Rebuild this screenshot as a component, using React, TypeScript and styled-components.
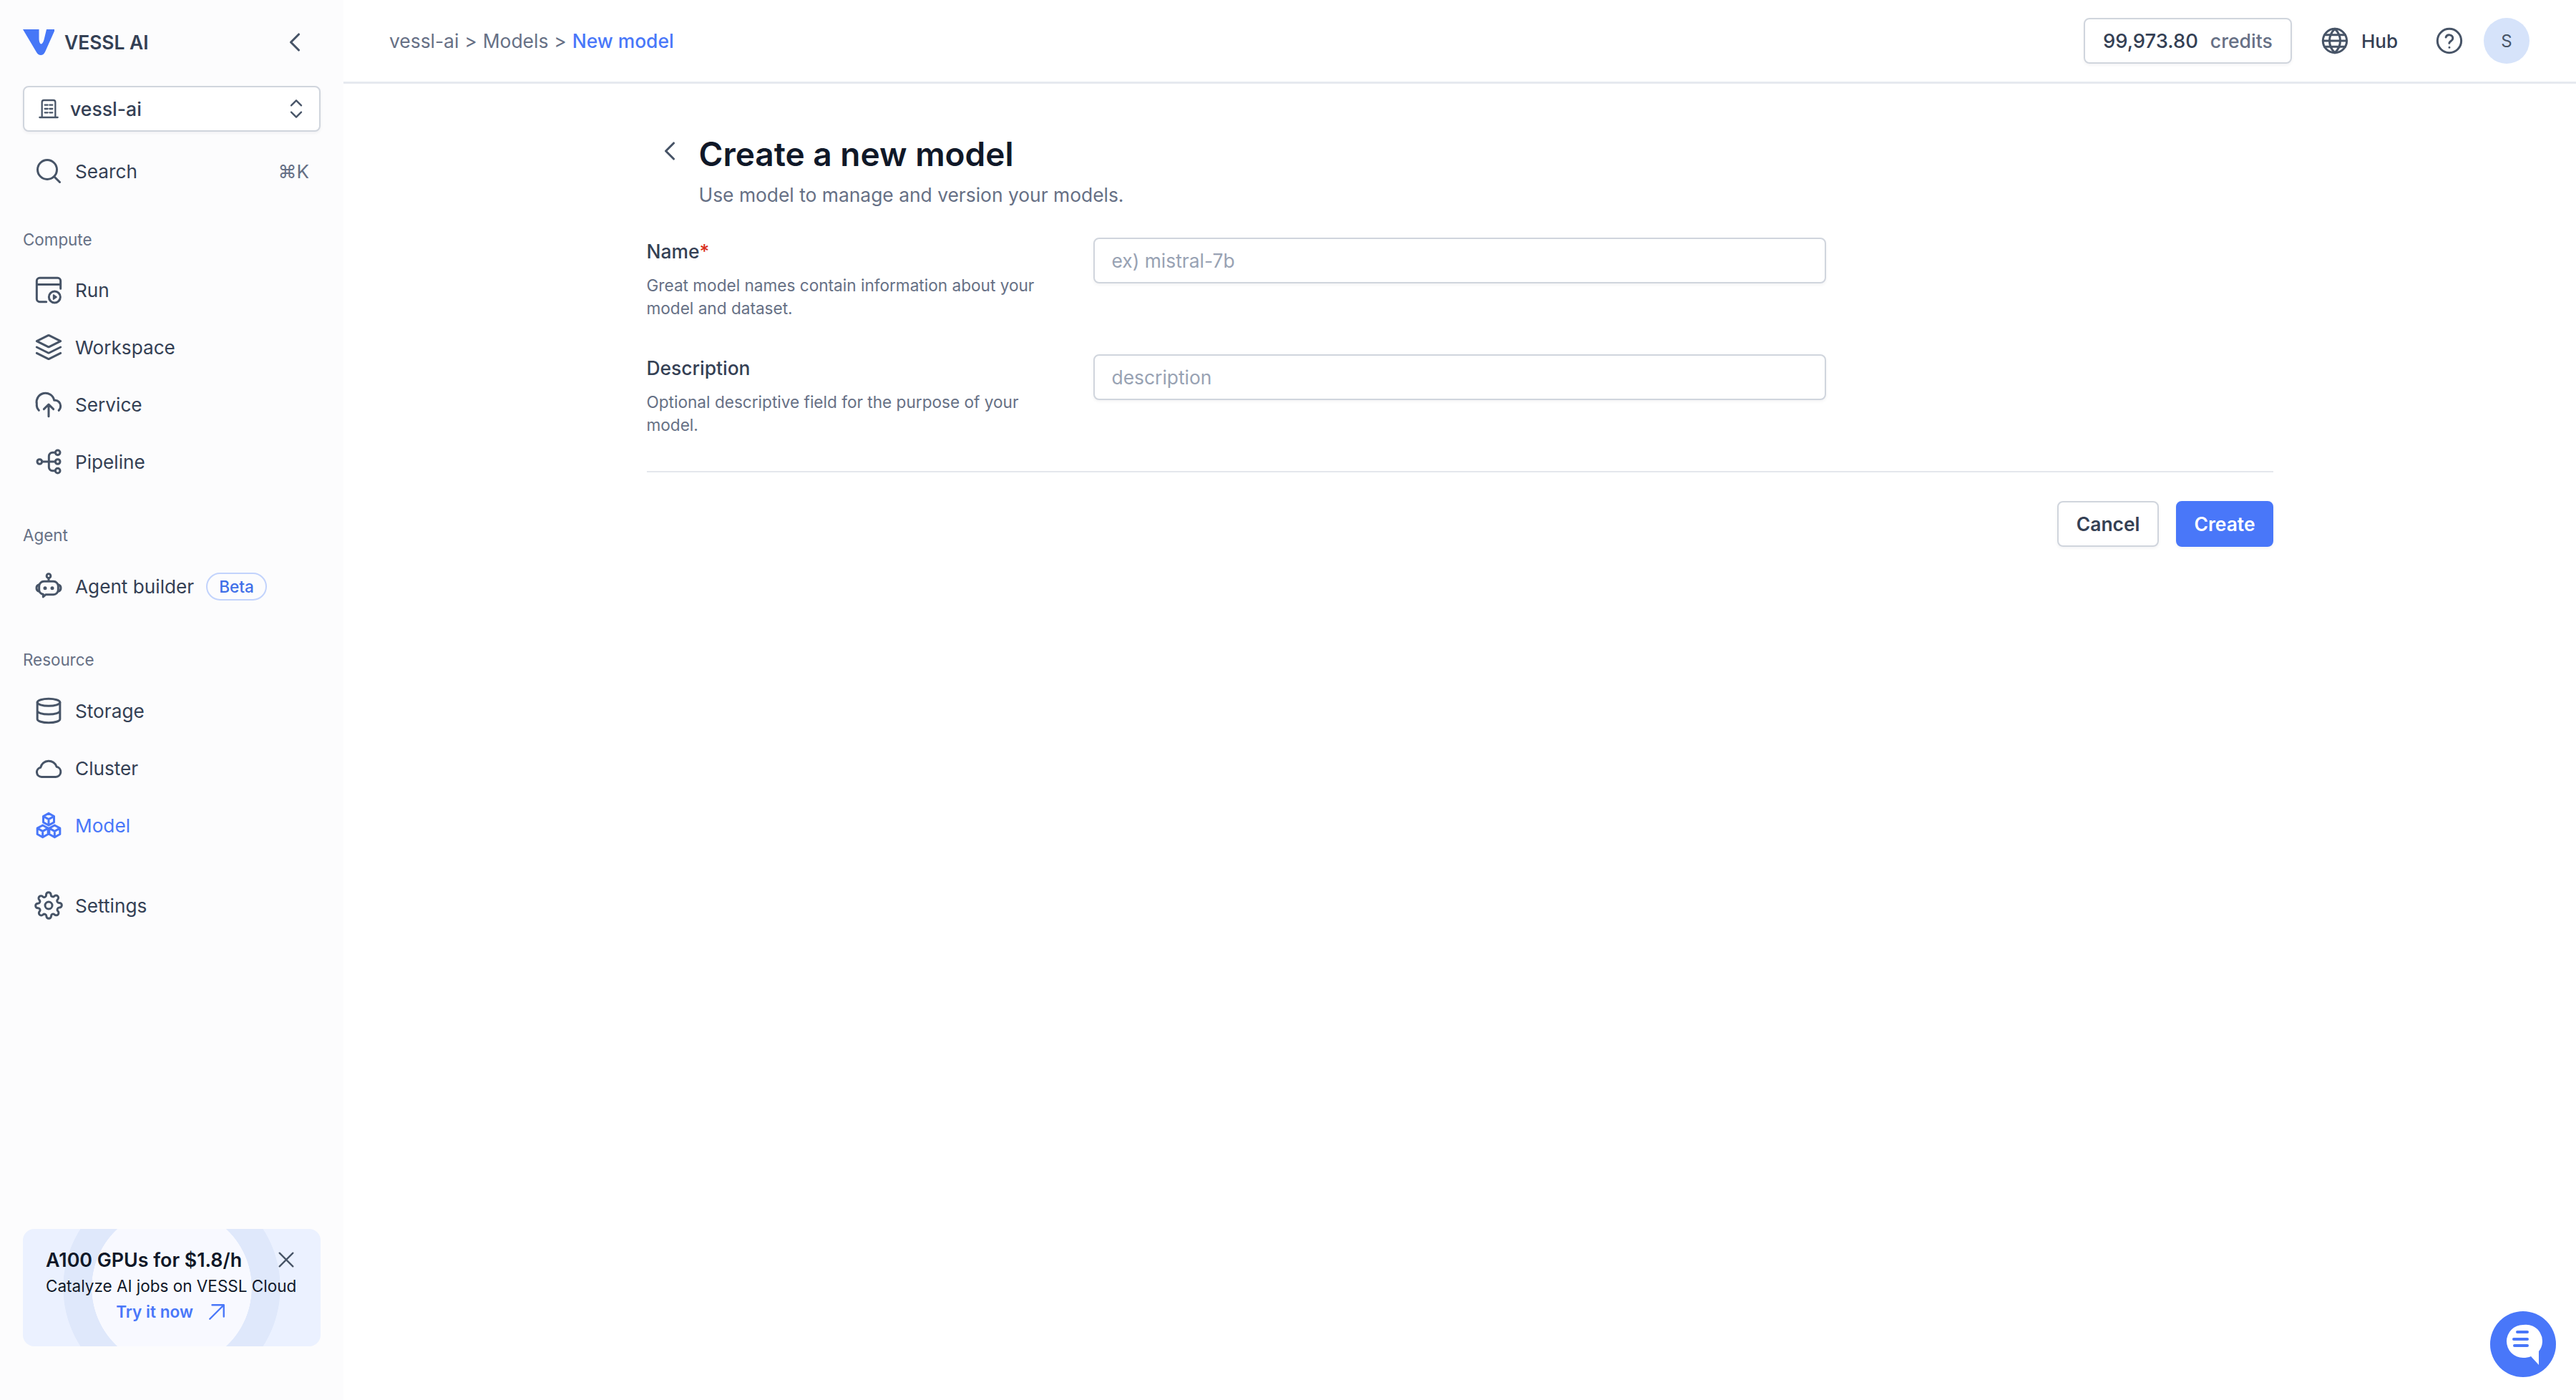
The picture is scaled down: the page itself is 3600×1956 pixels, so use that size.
import React from "react";
import styled, { createGlobalStyle } from "styled-components";

const BLUE = "#4977f9";

const Global = createGlobalStyle`
  html, body { margin: 0; padding: 0; background: #fff; }
  body { font-family: Inter, "Noto Sans", "Liberation Sans", sans-serif; }
  * { box-sizing: border-box; }
`;

const Shell = styled.div`
  display: flex;
  width: 3600px;
  height: 1956px;
  overflow: hidden;
`;

const Sidebar = styled.aside`
  width: 480px;
  flex: none;
  display: flex;
  flex-direction: column;
  padding: 0 32px 75px;
  background: #fcfcfd;
`;

const Brand = styled.div`
  height: 120px;
  flex: none;
  display: flex;
  align-items: center;
  padding-bottom: 2px;
`;

const BrandName = styled.span`
  margin-left: 14px;
  font-size: 26.4px;
  font-weight: 600;
  color: #344054;
`;

const Collapse = styled.span`
  margin-left: auto;
  margin-right: 14px;
  display: flex;
  color: #475467;
`;

const Selector = styled.div`
  height: 64px;
  flex: none;
  display: flex;
  align-items: center;
  padding: 0 18px 0 18px;
  margin-bottom: 15px;
  background: #fff;
  border: 2px solid #d0d5dd;
  border-radius: 8px;
  box-shadow: 0 2px 4px rgba(16, 24, 40, 0.05);
  font-size: 26.6px;
  font-weight: 500;
  color: #344054;
  svg { color: #475467; }
`;

const SelectorName = styled.span`
  margin-left: 14px;
  flex: 1;
`;

const NavRow = styled.div<{ $active?: boolean }>`
  height: 80px;
  flex: none;
  display: flex;
  align-items: center;
  gap: 17px;
  padding: 0 16px;
  font-size: 26.2px;
  color: ${(p) => (p.$active ? BLUE : "#344054")};
  svg { color: ${(p) => (p.$active ? BLUE : "#475467")}; flex: none; }
`;

const Shortcut = styled.span`
  margin-left: auto;
  color: #667085;
  font-size: 26px;
`;

const SectionLabel = styled.div<{ $first?: boolean }>`
  flex: none;
  padding: ${(p) => (p.$first ? "40px 0 14px" : "47px 0 15px")};
  font-size: 22.4px;
  line-height: 32px;
  color: #667085;
`;

const BetaBadge = styled.span`
  height: 39px;
  display: flex;
  align-items: center;
  padding: 0 16px;
  border: 2px solid #c2d3fc;
  border-radius: 20px;
  font-size: 22.6px;
  font-weight: 500;
  color: #3f6fe8;
`;

const SettingsGroup = styled.div`
  margin-top: 32px;
`;

const Promo = styled.div`
  margin-top: auto;
  height: 164px;
  flex: none;
  display: flex;
  flex-direction: column;
  padding: 26px 34px 0 32px;
  border-radius: 16px;
  background:
    radial-gradient(circle 112px at 208px 82px, #f8f9ff 99.5%, transparent 100%),
    radial-gradient(circle 152px at 208px 82px, #dfe8fb 99.5%, transparent 100%),
    #ebf1ff;
`;

const PromoTop = styled.div`
  display: flex;
  align-items: center;
  justify-content: space-between;
  height: 34px;
  svg { color: #475467; }
`;

const PromoTitle = styled.span`
  font-size: 26.8px;
  font-weight: 600;
  color: #101828;
`;

const PromoText = styled.div`
  margin-top: 4px;
  font-size: 22.5px;
  line-height: 32px;
  white-space: nowrap;
  color: #101828;
`;

const PromoLink = styled.div`
  margin-top: 4px;
  display: flex;
  align-items: center;
  justify-content: center;
  gap: 20px;
  font-size: 22.6px;
  line-height: 32px;
  font-weight: 600;
  color: ${BLUE};
  svg { color: ${BLUE}; }
`;

const Content = styled.div`
  flex: 1;
  display: flex;
  flex-direction: column;
  min-width: 0;
`;

const Header = styled.header`
  height: 117px;
  flex: none;
  display: flex;
  align-items: center;
  padding: 0 65px 0 64px;
  background: #fff;
  border-bottom: 3px solid #e6e9ef;
`;

const Crumbs = styled.div`
  display: flex;
  gap: 8px;
  padding-bottom: 1px;
  font-size: 26.4px;
  color: #667085;
`;

const CrumbCurrent = styled.span`
  color: ${BLUE};
  font-weight: 500;
`;

const HeaderRight = styled.div`
  margin-left: auto;
  display: flex;
  align-items: center;
`;

const Credits = styled.div`
  width: 291px;
  height: 64px;
  display: flex;
  align-items: center;
  justify-content: center;
  gap: 17px;
  margin-right: 40px;
  border: 2px solid #d0d5dd;
  border-radius: 8px;
  box-shadow: 0 2px 4px rgba(16, 24, 40, 0.05);
  font-size: 27.4px;
  font-weight: 500;
  color: #344054;
`;

const CreditsUnit = styled.span`
  font-size: 26.6px;
  color: #667085;
`;

const HubLink = styled.div`
  display: flex;
  align-items: center;
  gap: 17px;
  margin-right: 52px;
  font-size: 26px;
  font-weight: 500;
  color: #344054;
  svg { color: #475467; }
`;

const HelpIcon = styled.span`
  display: flex;
  color: #475467;
  margin-right: 28px;
`;

const Avatar = styled.div`
  width: 64px;
  height: 64px;
  border-radius: 50%;
  display: flex;
  align-items: center;
  justify-content: center;
  background: #d6e3fa;
  font-size: 24px;
  color: #475467;
`;

const Main = styled.main`
  flex: 1;
  display: flex;
  justify-content: center;
  background: #fff;
`;

const FormPanel = styled.div`
  width: 2273px;
  padding-top: 68px;
`;

const TitleRow = styled.div`
  display: flex;
  align-items: flex-start;
  gap: 19px;
  padding-left: 10px;
  svg { color: #475467; flex: none; margin-top: 4px; }
`;

const TitleBlock = styled.div`
  display: flex;
  flex-direction: column;
`;

const Title = styled.h1`
  margin: 0;
  font-size: 46px;
  line-height: 60px;
  font-weight: 600;
  color: #101828;
`;

const Subtitle = styled.p`
  margin: 7px 0 0;
  font-size: 26.4px;
  line-height: 40px;
  color: #667085;
`;

const FieldRow = styled.div<{ $gap: number }>`
  display: flex;
  margin-top: ${(p) => p.$gap}px;
`;

const FieldInfo = styled.div`
  width: 624px;
  flex: none;
`;

const FieldLabel = styled.div`
  font-size: 26.4px;
  line-height: 38px;
  font-weight: 500;
  color: #344054;
`;

const Required = styled.span`
  color: #d92d20;
`;

const FieldHelp = styled.div`
  margin-top: 13px;
  width: 560px;
  font-size: 22.6px;
  line-height: 32px;
  color: #667085;
`;

const TextInput = styled.input`
  width: 1024px;
  height: 64px;
  padding: 0 24px;
  background: #fff;
  border: 2px solid #d0d5dd;
  border-radius: 8px;
  box-shadow: 0 2px 4px rgba(16, 24, 40, 0.05);
  font-family: inherit;
  font-size: 26.4px;
  color: #344054;
  outline: none;
  &::placeholder { color: #98a2b3; opacity: 1; }
`;

const Divider = styled.hr`
  margin: 48px 0 40px;
  height: 2px;
  border: 0;
  background: #e4e7ec;
`;

const Actions = styled.div`
  display: flex;
  justify-content: flex-end;
  gap: 24px;
`;

const Button = styled.button<{ $primary?: boolean }>`
  height: 64px;
  padding: 0 ${(p) => (p.$primary ? "23px" : "25px")};
  border-radius: 8px;
  border: 2px solid ${(p) => (p.$primary ? BLUE : "#d0d5dd")};
  background: ${(p) => (p.$primary ? BLUE : "#fff")};
  color: ${(p) => (p.$primary ? "#fff" : "#344054")};
  box-shadow: 0 2px 4px rgba(16, 24, 40, 0.05);
  font-family: inherit;
  font-size: 26.4px;
  font-weight: 600;
`;

const ChatBubble = styled.div`
  position: fixed;
  left: 3480px;
  top: 1832px;
  width: 92px;
  height: 92px;
  border-radius: 50%;
  background: ${BLUE};
  display: flex;
  align-items: center;
  justify-content: center;
`;

const Glyph = styled.svg`
  display: block;
  fill: none;
  stroke: currentColor;
  stroke-linecap: round;
  stroke-linejoin: round;
`;

const Icon = ({ size = 40, sw = 1.8, children }: { size?: number; sw?: number; children: React.ReactNode }) => (
  <Glyph width={size} height={size} viewBox="0 0 24 24" strokeWidth={sw}>
    {children}
  </Glyph>
);

const Logo = () => (
  <svg width="44" height="36" viewBox="0 0 44 36">
    <path
      d="M0 0H22.5V13C22.5 17 24 20.5 25.5 20.5C27 20.5 28.5 18 29.5 14.5L33 0H44V2.5L31 31.5C29.5 34.8 27.5 36 25 36C22.5 36 20.5 34.5 19 32Z"
      fill="#4677f7"
    />
  </svg>
);

const icons = {
  run: (
    <Icon>
      <path d="M22 11V4.500a2.500 2.500 0 0 0-2.500-2.500h-15A2.500 2.500 0 0 0 2 4.500v15A2.500 2.500 0 0 0 4.500 22H10M2 7.500h20" />
      <circle cx="17" cy="18" r="4.800" />
      <path d="M16 16.200l2.600 1.800-2.600 1.800z" fill="currentColor" strokeWidth="1" />
    </Icon>
  ),
  layers: (
    <Icon>
      <path d="M2 12l9.600 4.800c.15.07.25.12.4.12s.25-.05.4-.12L22 12M2 17l9.600 4.800c.15.07.25.12.4.12s.25-.05.4-.12L22 17M2 7l9.600-4.800c.15-.07.25-.12.4-.12s.25.05.4.12L22 7l-9.600 4.800c-.15.07-.25.12-.4.12s-.25-.05-.4-.12L2 7z" />
    </Icon>
  ),
  service: (
    <Icon>
      <path d="M8 16l4-4 4 4M12 12v10M20.500 17a5 5 0 0 0 1.500-3.800 4.800 4.800 0 0 0-4.500-4.700h-.9A7 7 0 0 0 2 11.500 7 7 0 0 0 3.800 17" />
    </Icon>
  ),
  pipeline: (
    <Icon>
      <circle cx="4.400" cy="12" r="2" />
      <circle cx="19.600" cy="4.400" r="2" />
      <circle cx="19.600" cy="12" r="2" />
      <circle cx="19.600" cy="19.600" r="2" />
      <path d="M6.400 12h11.200M17.600 4.400h-2.400a3 3 0 0 0-3 3v9.200a3 3 0 0 0 3 3h2.400" />
    </Icon>
  ),
  agent: (
    <Icon>
      <circle cx="12" cy="3.400" r="1.700" />
      <path d="M12 5.200V8M8 8h8a4 4 0 0 1 4 4v3a4 4 0 0 1-4 4H9.600L7.400 21v-2.200A4 4 0 0 1 4 15v-3a4 4 0 0 1 4-4z" />
      <path d="M4 10.600a3 3 0 0 0-2.200 2.900 3 3 0 0 0 2.200 2.900M20 10.600a3 3 0 0 1 2.200 2.900 3 3 0 0 1-2.200 2.900" />
      <circle cx="9" cy="13.600" r=".6" fill="currentColor" />
      <circle cx="15" cy="13.600" r=".6" fill="currentColor" />
    </Icon>
  ),
  storage: (
    <Icon>
      <ellipse cx="12" cy="5" rx="9.500" ry="3" />
      <path d="M2.500 5v14c0 1.700 4 3 9.500 3s9.500-1.300 9.500-3V5M2.500 12c0 1.700 4 3 9.500 3s9.500-1.300 9.500-3" />
    </Icon>
  ),
  cloud: (
    <Icon>
      <path d="M6 19.500a4 4 0 0 1-.8-7.900 7 7 0 0 1 13.500-.6A4.300 4.300 0 0 1 18 19.500z" />
    </Icon>
  ),
  model: (
    <Icon>
      <path d="M12 2l4.500 2.500v5L12 12 7.500 9.500v-5zM7.500 4.500L12 7l4.500-2.500M12 7v5" />
      <path d="M7 12l4.500 2.500v5L7 22l-4.500-2.500v-5zM2.500 14.500L7 17l4.500-2.500M7 17v5" />
      <path d="M17 12l4.500 2.500v5L17 22l-4.500-2.500v-5zM12.500 14.500L17 17l4.500-2.500M17 17v5" />
    </Icon>
  ),
  settings: (
    <Icon>
      <circle cx="12" cy="12" r="3" />
      <path d="M19.400 15a1.650 1.650 0 0 0 .33 1.820l.06.06a2 2 0 1 1-2.830 2.830l-.06-.06a1.650 1.650 0 0 0-2.800 1.170V21a2 2 0 1 1-4 0v-.09a1.650 1.650 0 0 0-2.800-1.150l-.06.06a2 2 0 1 1-2.830-2.830l.06-.06A1.650 1.650 0 0 0 3.300 14.300H3a2 2 0 1 1 0-4h.09a1.650 1.650 0 0 0 1.150-2.800l-.06-.06a2 2 0 1 1 2.830-2.830l.06.06A1.650 1.650 0 0 0 9.900 3.500V3a2 2 0 1 1 4 0v.09a1.650 1.650 0 0 0 2.800 1.150l.06-.06a2 2 0 1 1 2.830 2.830l-.06.06a1.650 1.650 0 0 0 1.170 2.800H21a2 2 0 1 1 0 4h-.09a1.650 1.650 0 0 0-1.510 1z" />
    </Icon>
  ),
};

const nav = (icon: React.ReactNode, label: string, active?: boolean) => (
  <NavRow $active={active}>
    {icon}
    <span>{label}</span>
  </NavRow>
);

export default function App() {
  return (
    <>
      <Global />
      <Shell>
        <Sidebar>
          <Brand>
            <Logo />
            <BrandName>VESSL AI</BrandName>
            <Collapse>
              <Icon size={44} sw={1.7}>
                <path d="M15 6l-6 6 6 6" />
              </Icon>
            </Collapse>
          </Brand>
          <Selector>
            <Icon size={32} sw={1.7}>
              <path d="M5 21V5a2 2 0 0 1 2-2h10a2 2 0 0 1 2 2v16M2.500 21h19M8 8h3M13 8h3M8 12h3M13 12h3M8 16h3M13 16h3" />
            </Icon>
            <SelectorName>vessl-ai</SelectorName>
            <Icon size={28} sw={2}>
              <path d="M6 8l6-6 6 6M6 16l6 6 6-6" />
            </Icon>
          </Selector>
          <NavRow>
            <Icon>
              <circle cx="10.800" cy="10.800" r="8.100" />
              <path d="M21.300 21.300l-4.500-4.500" />
            </Icon>
            <span>Search</span>
            <Shortcut>⌘K</Shortcut>
          </NavRow>

          <SectionLabel $first>Compute</SectionLabel>
          {nav(icons.run, "Run")}
          {nav(icons.layers, "Workspace")}
          {nav(icons.service, "Service")}
          {nav(icons.pipeline, "Pipeline")}

          <SectionLabel>Agent</SectionLabel>
          <NavRow>
            {icons.agent}
            <span>Agent builder</span>
            <BetaBadge>Beta</BetaBadge>
          </NavRow>

          <SectionLabel>Resource</SectionLabel>
          {nav(icons.storage, "Storage")}
          {nav(icons.cloud, "Cluster")}
          {nav(icons.model, "Model", true)}

          <SettingsGroup>{nav(icons.settings, "Settings")}</SettingsGroup>

          <Promo>
            <PromoTop>
              <PromoTitle>A100 GPUs for $1.8/h</PromoTitle>
              <Icon size={28} sw={2}>
                <path d="M4 4l16 16M20 4L4 20" />
              </Icon>
            </PromoTop>
            <PromoText>Catalyze AI jobs on VESSL Cloud</PromoText>
            <PromoLink>
              <span>Try it now</span>
              <Icon size={26} sw={2.2}>
                <path d="M3 21L21 3M6 3h15v15" />
              </Icon>
            </PromoLink>
          </Promo>
        </Sidebar>

        <Content>
          <Header>
            <Crumbs>
              <span>vessl-ai</span>
              <span>&gt;</span>
              <span>Models</span>
              <span>&gt;</span>
              <CrumbCurrent>New model</CrumbCurrent>
            </Crumbs>
            <HeaderRight>
              <Credits>
                <span>99,973.80</span>
                <CreditsUnit>credits</CreditsUnit>
              </Credits>
              <HubLink>
                <Icon>
                  <circle cx="12" cy="12" r="10" />
                  <path d="M2 12h20M3.300 7h17.400M3.300 17h17.400M12 2c-6 5.500-6 14.500 0 20M12 2c6 5.500 6 14.500 0 20" />
                </Icon>
                <span>Hub</span>
              </HubLink>
              <HelpIcon>
                <Icon>
                  <circle cx="12" cy="12" r="10" />
                  <path d="M9.100 9a3 3 0 0 1 5.800 1c0 2-3 2.500-3 4M12 17.500h.01" />
                </Icon>
              </HelpIcon>
              <Avatar>S</Avatar>
            </HeaderRight>
          </Header>
          <Main>
            <FormPanel>
              <TitleRow>
                <Icon size={44} sw={1.7}>
                  <path d="M15 6l-6 6 6 6" />
                </Icon>
                <TitleBlock>
                  <Title>Create a new model</Title>
                  <Subtitle>Use model to manage and version your models.</Subtitle>
                </TitleBlock>
              </TitleRow>
              <FieldRow $gap={40}>
                <FieldInfo>
                  <FieldLabel>
                    Name<Required>*</Required>
                  </FieldLabel>
                  <FieldHelp>Great model names contain information about your model and dataset.</FieldHelp>
                </FieldInfo>
                <TextInput placeholder="ex) mistral-7b" />
              </FieldRow>
              <FieldRow $gap={48}>
                <FieldInfo>
                  <FieldLabel>Description</FieldLabel>
                  <FieldHelp>Optional descriptive field for the purpose of your model.</FieldHelp>
                </FieldInfo>
                <TextInput placeholder="description" />
              </FieldRow>
              <Divider />
              <Actions>
                <Button>Cancel</Button>
                <Button $primary>Create</Button>
              </Actions>
            </FormPanel>
          </Main>
        </Content>
      </Shell>
      <ChatBubble>
        <svg width="60" height="66" viewBox="0 0 60 66">
          <path d="M30 6a23 23 0 0 0 0 46c4 0 8-.5 11-2l11 12V43a23 23 0 0 0-22-37z" fill="#fff" />
          <path d="M22 16h14M17 26h19M18 35h18" stroke={BLUE} strokeWidth="4" strokeLinecap="round" />
        </svg>
      </ChatBubble>
    </>
  );
}
